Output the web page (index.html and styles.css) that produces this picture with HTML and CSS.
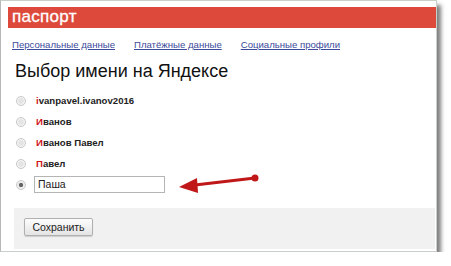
FILE: index.html
```html
<!DOCTYPE html>
<html>
<head>
<meta charset="utf-8">
<link rel="stylesheet" href="styles.css">
</head>
<body>
<div class="card">
  <div class="header">паспорт</div>
  <nav class="tabs">
    <a href="#">Персональные данные</a>
    <a href="#">Платёжные данные</a>
    <a href="#">Социальные профили</a>
  </nav>
  <h1 class="title">Выбор имени на Яндексе</h1>
  <ul class="options">
    <li><span class="radio"></span><span class="label"><b>i</b>vanpavel.ivanov2016</span></li>
    <li><span class="radio"></span><span class="label"><b>И</b>ванов</span></li>
    <li><span class="radio"></span><span class="label"><b>И</b>ванов Павел</span></li>
    <li><span class="radio"></span><span class="label"><b>П</b>авел</span></li>
    <li><span class="radio checked"></span><span class="field">Паша</span></li>
  </ul>
  <svg class="arrow" width="90" height="24" viewBox="0 0 90 24">
    <line x1="78" y1="5" x2="18" y2="12" stroke="#c01818" stroke-width="3" stroke-linecap="round"/>
    <circle cx="78" cy="5" r="3.5" fill="#c01818"/>
    <polygon points="2,14 20,5 21,20" fill="#c01818"/>
  </svg>
  <div class="footer">
    <button class="save">Сохранить</button>
  </div>
</div>
</body>
</html>
```

FILE: styles.css
```css
html, body {
  margin: 0;
  padding: 0;
  background: #fff;
}
body {
  font-family: "Liberation Sans", Arial, sans-serif;
}
.card {
  position: relative;
  box-sizing: border-box;
  width: 437px;
  height: 252px;
  border: 1px solid #c9cfc9;
  border-left-color: #b8b8b8;
  background: #fff;
  box-shadow: 4px 5px 4px rgba(60, 60, 60, 0.65);
  padding-top: 6px;
}
.header {
  margin-left: 7px;
  height: 21px;
  background: #dd4a3b;
  color: #fff;
  font-size: 17px;
  line-height: 20px;
  padding-left: 4px;
  letter-spacing: 0.3px;
  -webkit-text-stroke: 0.3px #fff;
}
.tabs {
  display: flex;
  gap: 19px;
  padding-left: 11px;
  margin-top: 10px;
  font-size: 9.6px;
  line-height: 13px;
}
.tabs a {
  color: #3b4a9a;
  text-decoration: underline;
}
.title {
  margin: 9px 0 0 14px;
  font-weight: normal;
  font-size: 18px;
  line-height: 22px;
  color: #111;
}
.options {
  list-style: none;
  margin: 8px 0 0 0;
  padding: 0 0 0 15px;
}
.options li {
  display: flex;
  align-items: center;
  height: 21px;
}
.radio {
  box-sizing: border-box;
  width: 10px;
  height: 10px;
  border-radius: 50%;
  border: 1px solid #c8c8c8;
  background: radial-gradient(circle, #e4e4e4 0 40%, #f4f4f4 60%);
  margin-right: 10px;
  flex: none;
}
.radio.checked {
  background: radial-gradient(circle, #666 0 30%, #e8e8e8 45%, #f4f4f4 70%);
}
.label {
  font-size: 9.6px;
  font-weight: bold;
  color: #222;
}
.label b {
  color: #d0151a;
}
.field {
  box-sizing: border-box;
  width: 131px;
  height: 17px;
  border: 1px solid #b5b5b5;
  font-size: 10.5px;
  line-height: 15px;
  padding-left: 3px;
  color: #222;
  margin-left: -2px;
}
.arrow {
  position: absolute;
  left: 176px;
  top: 172px;
}
.footer {
  margin: 13px 0 0 13px;
  width: 421px;
  height: 41px;
  background: #f1f1f1;
  padding: 9px 0 0 10px;
  box-sizing: border-box;
}
.save {
  width: 69px;
  height: 18px;
  border: 1px solid #b0b0b0;
  border-radius: 2px;
  background: linear-gradient(#fdfdfd, #e4e4e4);
  font-family: "Liberation Sans", Arial, sans-serif;
  font-size: 10.5px;
  color: #222;
  padding: 0;
  box-shadow: 0 1px 1px rgba(0,0,0,0.15);
}
```
